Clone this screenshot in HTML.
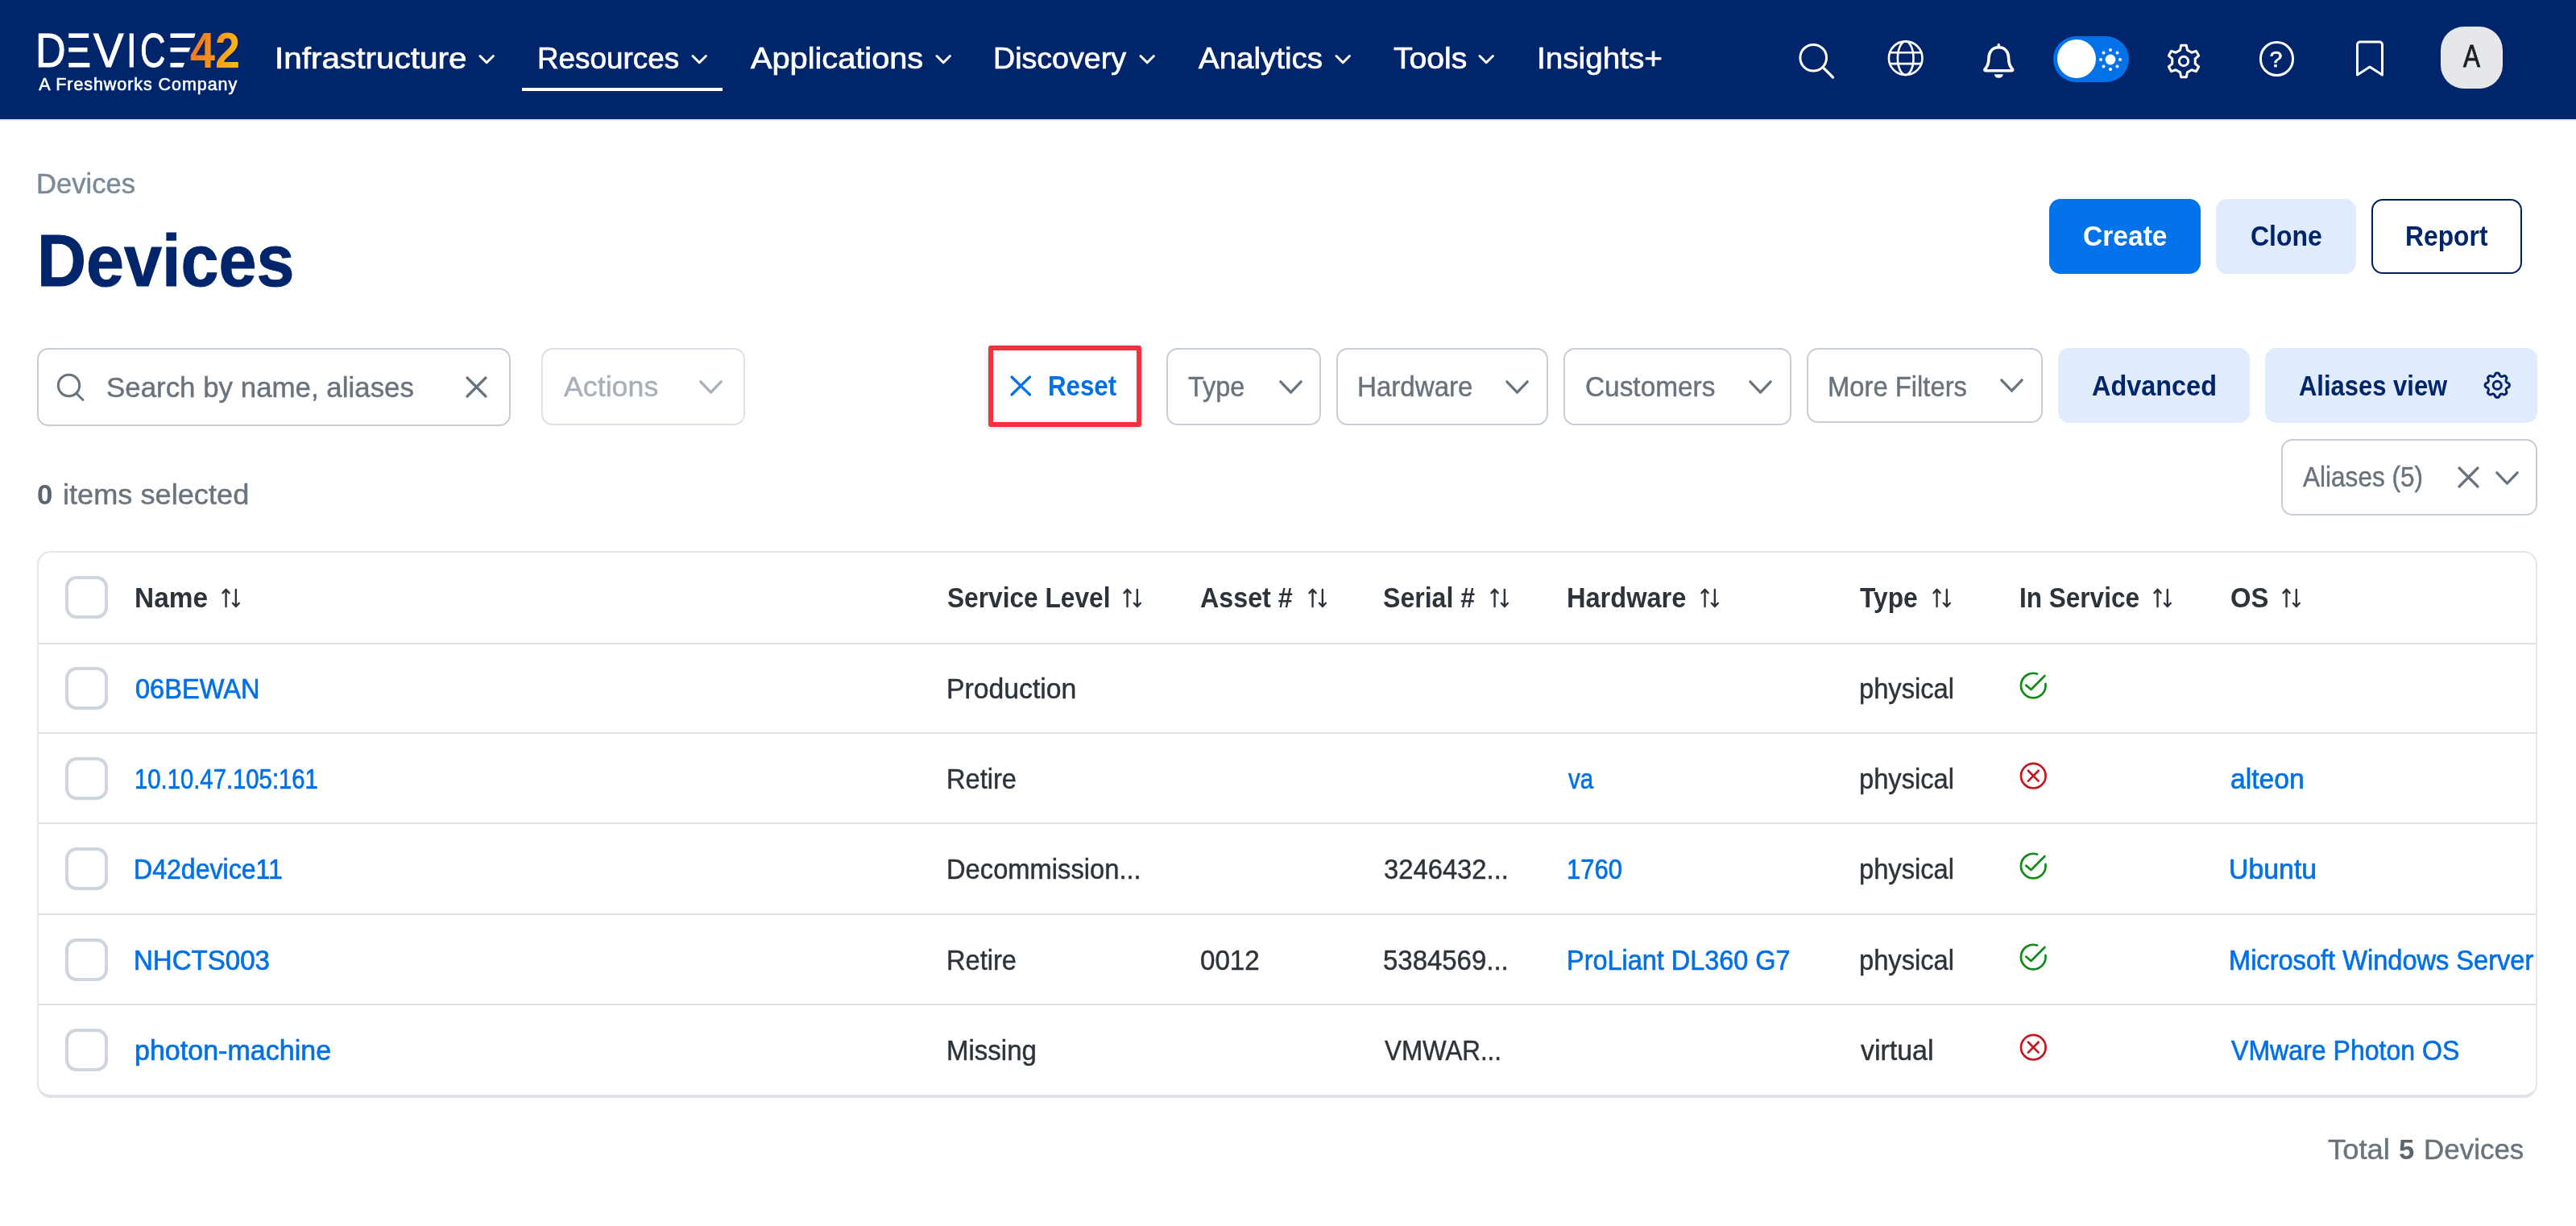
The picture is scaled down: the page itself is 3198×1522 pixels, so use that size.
<!DOCTYPE html>
<html lang="en"><head><meta charset="utf-8"><title>Devices</title><style>
*{box-sizing:border-box;margin:0;padding:0}
html,body{width:3198px;height:1522px;overflow:hidden;background:#fff}
body{position:relative;font-family:"Liberation Sans",sans-serif}
.t{position:absolute;white-space:nowrap;margin:0;display:block}
.abs,.icons svg,.chev{position:absolute}
.nav{position:absolute;left:0;top:0;width:3198px;height:148px;background:#00256b;box-shadow:0 2px 0 #e2e5ea;will-change:transform;z-index:2}
main{position:absolute;left:0;top:0;width:3198px;height:1522px;will-change:transform;z-index:1}
.ni{text-decoration:none}
.ul{position:absolute;left:648px;top:109.200px;width:249px;height:3.800px;background:#fff}
.toggle{position:absolute;left:2549px;top:44.800px;width:94px;height:57.200px;border-radius:29px;background:#0372e8}
.toggle svg{position:absolute}
.knob{position:absolute;left:4.500px;top:3.800px;width:48px;height:48px;border-radius:50%;background:#fff}
.help{position:absolute;left:2804.500px;top:51px;width:43.500px;height:43.500px;border:3px solid #fff;border-radius:50%}
.avatar{position:absolute;left:3030px;top:33px;width:77px;height:76.500px;border-radius:29px;background:#e5e7eb}
.btn{position:absolute;border-radius:14px}
.primary{background:#0273ea}
.light{background:#e0ebfd}
.outline{border:2px solid #001f63;background:#fff}
.box{position:absolute;border:2px solid #c6cdd5;border-radius:14px;background:#fff}
.reset{position:absolute;border:6px solid #f7303f;border-radius:3px;box-shadow:0 1px 6px rgba(0,0,0,.16),inset 0 0 4px rgba(0,0,0,.08)}
.table{position:absolute;border:2px solid #e3e6ea;border-bottom:4px solid #dfe3e8;border-radius:17px}
.hl{position:absolute;left:48px;width:3100px;height:2px;background:#dfe3e8}
.cb{position:absolute;left:81px;width:53px;height:53px;border:4px solid #cfd5dc;border-radius:14px}
.clip{position:absolute;overflow:hidden}
</style></head><body>
<header class="nav">
<div class="logo" aria-label="DEVICE42 A Freshworks Company">
<span class="t" style="left:43.52px;top:27.08px;font-size:59.8px;line-height:72px;font-weight:400;color:#fff;letter-spacing:0.000px;-webkit-text-stroke:1px #fff;transform:scaleX(0.8725);transform-origin:0 0;">D</span><span class="t" style="left:74.46px;top:27.08px;font-size:59.8px;line-height:72px;font-weight:400;color:#fff;letter-spacing:0.000px;-webkit-text-stroke:1px #fff;transform:scaleX(0.9874);transform-origin:0 0;clip-path:polygon(11.39px 2.92px,39.04px 2.92px,39.04px 67.92px,11.39px 67.92px);">E</span><span class="t" style="left:116.45px;top:27.08px;font-size:59.8px;line-height:72px;font-weight:400;color:#fff;letter-spacing:0.000px;-webkit-text-stroke:1px #fff;transform:scaleX(0.9401);transform-origin:0 0;">V</span><span class="t" style="left:156.74px;top:27.08px;font-size:59.8px;line-height:72px;font-weight:400;color:#fff;letter-spacing:0.000px;-webkit-text-stroke:1px #fff;transform:scaleX(0.7532);transform-origin:0 0;">I</span><span class="t" style="left:173.69px;top:27.08px;font-size:59.8px;line-height:72px;font-weight:400;color:#fff;letter-spacing:0.000px;-webkit-text-stroke:1px #fff;transform:scaleX(0.7288);transform-origin:0 0;">C</span><span class="t" style="left:196.72px;top:27.08px;font-size:59.8px;line-height:72px;font-weight:400;color:#fff;letter-spacing:0.000px;-webkit-text-stroke:1px #fff;transform:scaleX(1.2404);transform-origin:0 0;clip-path:polygon(11.68px 2.92px,40.63px 2.92px,20.71px 67.92px,11.68px 67.92px);">E</span><span class="t" style="left:236.46px;top:24.40px;font-size:63.5px;line-height:76px;font-weight:700;color:#f7941d;letter-spacing:0.000px;background:linear-gradient(100deg,#f47b20 20%,#fdb913 90%);-webkit-background-clip:text;background-clip:text;-webkit-text-fill-color:transparent;transform:scaleX(0.8789);transform-origin:0 0;">42</span>
<span class="t" style="left:48.26px;top:92.05px;font-size:21.5px;line-height:26px;font-weight:400;color:#fff;letter-spacing:0.931px;-webkit-text-stroke:0.55px #fff;">A Freshworks Company</span>
</div>
<nav>
<a class="ni"><span class="t" style="left:340.56px;top:51.15px;font-size:36.8px;line-height:44px;font-weight:400;color:#fff;letter-spacing:0.000px;-webkit-text-stroke:0.7px #fff;transform:scaleX(1.1004);transform-origin:0 0;">Infrastructure</span>
<svg class="chev" style="left:593.8px;top:67px" width="22" height="14" viewBox="0 0 22 14"><path d="M2 2.5 L10.2 10.7 L18.4 2.5" fill="none" stroke="#fff" stroke-width="3" stroke-linecap="round" stroke-linejoin="round"/></svg>
</a>
<a class="ni"><span class="t" style="left:666.88px;top:51.15px;font-size:36.8px;line-height:44px;font-weight:400;color:#fff;letter-spacing:0.000px;-webkit-text-stroke:0.7px #fff;transform:scaleX(1.0010);transform-origin:0 0;">Resources</span>
<svg class="chev" style="left:857.5px;top:67px" width="22" height="14" viewBox="0 0 22 14"><path d="M2 2.5 L10.2 10.7 L18.4 2.5" fill="none" stroke="#fff" stroke-width="3" stroke-linecap="round" stroke-linejoin="round"/></svg>
</a>
<a class="ni"><span class="t" style="left:931.62px;top:51.15px;font-size:36.8px;line-height:44px;font-weight:400;color:#fff;letter-spacing:0.000px;-webkit-text-stroke:0.7px #fff;transform:scaleX(1.0796);transform-origin:0 0;">Applications</span>
<svg class="chev" style="left:1160.8px;top:67px" width="22" height="14" viewBox="0 0 22 14"><path d="M2 2.5 L10.2 10.7 L18.4 2.5" fill="none" stroke="#fff" stroke-width="3" stroke-linecap="round" stroke-linejoin="round"/></svg>
</a>
<a class="ni"><span class="t" style="left:1233.42px;top:51.15px;font-size:36.8px;line-height:44px;font-weight:400;color:#fff;letter-spacing:0.000px;-webkit-text-stroke:0.7px #fff;transform:scaleX(1.0219);transform-origin:0 0;">Discovery</span>
<svg class="chev" style="left:1414.0px;top:67px" width="22" height="14" viewBox="0 0 22 14"><path d="M2 2.5 L10.2 10.7 L18.4 2.5" fill="none" stroke="#fff" stroke-width="3" stroke-linecap="round" stroke-linejoin="round"/></svg>
</a>
<a class="ni"><span class="t" style="left:1488.42px;top:51.15px;font-size:36.8px;line-height:44px;font-weight:400;color:#fff;letter-spacing:0.000px;-webkit-text-stroke:0.7px #fff;transform:scaleX(1.0457);transform-origin:0 0;">Analytics</span>
<svg class="chev" style="left:1656.9px;top:67px" width="22" height="14" viewBox="0 0 22 14"><path d="M2 2.5 L10.2 10.7 L18.4 2.5" fill="none" stroke="#fff" stroke-width="3" stroke-linecap="round" stroke-linejoin="round"/></svg>
</a>
<a class="ni"><span class="t" style="left:1730.12px;top:51.15px;font-size:36.8px;line-height:44px;font-weight:400;color:#fff;letter-spacing:0.000px;-webkit-text-stroke:0.7px #fff;transform:scaleX(1.0616);transform-origin:0 0;">Tools</span>
<svg class="chev" style="left:1835.4px;top:67px" width="22" height="14" viewBox="0 0 22 14"><path d="M2 2.5 L10.2 10.7 L18.4 2.5" fill="none" stroke="#fff" stroke-width="3" stroke-linecap="round" stroke-linejoin="round"/></svg>
</a>
<a class="ni"><span class="t" style="left:1907.63px;top:51.15px;font-size:36.8px;line-height:44px;font-weight:400;color:#fff;letter-spacing:0.000px;-webkit-text-stroke:0.7px #fff;transform:scaleX(1.0504);transform-origin:0 0;">Insights+</span>
</a>
<i class="ul"></i>
</nav>
<div class="icons">
<svg style="left:2229px;top:50px" width="52" height="52" viewBox="0 0 52 52"><circle cx="22.2" cy="21.7" r="16.3" fill="none" stroke="#fff" stroke-width="3"/><path d="M34 33.5 L46.5 46" stroke="#fff" stroke-width="3.2" stroke-linecap="round"/></svg>
<svg style="left:2341px;top:48px" width="50" height="50" viewBox="0 0 50 50"><g fill="none" stroke="#fff" stroke-width="2.6"><circle cx="24.7" cy="24.2" r="20.8"/><ellipse cx="24.7" cy="24.2" rx="9.800" ry="20.8"/><path d="M5.200 17.300H44.200M5.200 31.100H44.200"/></g></svg>
<svg style="left:2458px;top:50px" width="48" height="52" viewBox="0 0 48 52"><path d="M23.3 5.800 v3 M23.3 8.800 c-7.800 0 -12.300 5.800 -12.300 13.200 c0 8 -2.200 11.200 -4.700 13.800 c-0.800 0.800 -0.300 2 0.800 2 h32.400 c1.100 0 1.600 -1.200 0.800 -2 c-2.500 -2.600 -4.700 -5.800 -4.700 -13.800 c0 -7.400 -4.500 -13.200 -12.300 -13.200 z" fill="none" stroke="#fff" stroke-width="3.6" stroke-linejoin="round" stroke-linecap="round"/><path d="M17.800 42.300 a5.600 5.600 0 0 0 11 0 z" fill="#fff"/></svg>
<div class="toggle"><i class="knob"></i><svg style="left:54px;top:12px" width="34" height="34" viewBox="0 0 34 34"><g fill="#fff"><circle cx="17" cy="17" r="6.4"/><circle cx="17" cy="5" r="2"/><circle cx="17" cy="29" r="2"/><circle cx="5" cy="17" r="2"/><circle cx="29" cy="17" r="2"/><circle cx="8.500" cy="8.500" r="2"/><circle cx="25.500" cy="8.500" r="2"/><circle cx="8.500" cy="25.500" r="2"/><circle cx="25.500" cy="25.500" r="2"/></g></svg></div>
<svg style="left:2687.300px;top:49.900px" width="48" height="52" viewBox="0 0 48 52"><g fill="none" stroke="#fff" stroke-width="3" stroke-linejoin="round"><path d="M19.61 12.08 L20.72 6.37 L27.28 6.37 L28.39 12.08 L33.86 15.24 L39.36 13.34 L42.64 19.03 L38.25 22.84 L38.25 29.16 L42.64 32.97 L39.36 38.66 L33.86 36.76 L28.39 39.92 L27.28 45.63 L20.72 45.63 L19.61 39.92 L14.14 36.76 L8.64 38.66 L5.36 32.97 L9.75 29.16 L9.75 22.84 L5.36 19.03 L8.64 13.34 L14.14 15.24 Z"/><circle cx="24" cy="26" r="5.700"/></g></svg>
<div class="help"></div><span class="t" style="left:2817.53px;top:55.92px;font-size:28.5px;line-height:34px;font-weight:400;color:#fff;letter-spacing:0.000px;-webkit-text-stroke:0.6px #fff;">?</span>
<svg style="left:2921px;top:48px" width="42" height="50" viewBox="0 0 42 50"><path d="M5.5 7.500 a3.500 3.500 0 0 1 3.500 -3.500 h24 a3.500 3.500 0 0 1 3.500 3.500 V45 L21 35 L5.500 45 Z" fill="none" stroke="#fff" stroke-width="3" stroke-linejoin="round"/></svg>
<div class="avatar"></div><span class="t" style="left:3057.64px;top:46.01px;font-size:39.5px;line-height:47px;font-weight:400;color:#1b1f24;letter-spacing:0.000px;-webkit-text-stroke:0.9px #1b1f24;transform:scaleX(0.7941);transform-origin:0 0;">A</span>
</div>
</header>
<main>
<div class="t" style="left:45.16px;top:208.15px;font-size:34.5px;line-height:41px;font-weight:400;color:#7a8a96;letter-spacing:0.000px;transform:scaleX(1.0023);transform-origin:0 0;-webkit-text-stroke:0.45px #7a8a96;">Devices</div>
<h1 class="t" style="left:45.85px;top:269.01px;font-size:90.6px;line-height:109px;font-weight:700;color:#00256b;letter-spacing:0.000px;-webkit-text-stroke:1px #00256b;transform:scaleX(0.9326);transform-origin:0 0;">Devices</h1>
<div class="btn primary" style="left:2544px;top:246.800px;width:188.200px;height:93.200px"></div><span class="t" style="left:2585.72px;top:272.01px;font-size:34.6px;line-height:42px;font-weight:700;color:#fff;letter-spacing:0.000px;transform:scaleX(0.9711);transform-origin:0 0;">Create</span>
<div class="btn light" style="left:2750.900px;top:246.800px;width:173.800px;height:93.200px"></div><span class="t" style="left:2793.89px;top:272.01px;font-size:34.6px;line-height:42px;font-weight:700;color:#00256b;letter-spacing:0.000px;transform:scaleX(0.9246);transform-origin:0 0;">Clone</span>
<div class="btn outline" style="left:2944px;top:246.800px;width:187px;height:93.200px"></div><span class="t" style="left:2986.17px;top:272.01px;font-size:34.6px;line-height:42px;font-weight:700;color:#00256b;letter-spacing:0.000px;transform:scaleX(0.9201);transform-origin:0 0;">Report</span>
<div class="box" style="left:46.400px;top:432.100px;width:587.300px;height:96.600px"></div>
<svg class="abs" style="left:68px;top:461.600px" width="40" height="40" viewBox="0 0 40 40"><circle cx="17.500" cy="16.500" r="13.200" fill="none" stroke="#68737d" stroke-width="3"/><path d="M27 26.500 L35 34.500" stroke="#68737d" stroke-width="3" stroke-linecap="round"/></svg>
<span class="t" style="left:132.12px;top:459.64px;font-size:34.8px;line-height:42px;font-weight:400;color:#68737d;letter-spacing:0.000px;transform:scaleX(1.0024);transform-origin:0 0;-webkit-text-stroke:0.45px #68737d;">Search by name, aliases</span>
<svg class="abs" style="left:575.100px;top:464px" width="34" height="34" viewBox="0 0 34 34"><path d="M5 5 L28 28 M28 5 L5 28" stroke="#68737d" stroke-width="3.200" stroke-linecap="round"/></svg>
<div class="box" style="left:672.400px;top:432.100px;width:252.300px;height:96.300px;border-color:#dde2e8"></div>
<span class="t" style="left:700.33px;top:459.01px;font-size:34.6px;line-height:42px;font-weight:400;color:#a7b0b9;letter-spacing:0.000px;transform:scaleX(1.0341);transform-origin:0 0;-webkit-text-stroke:0.45px #a7b0b9;">Actions</span>
<svg class="abs" style="left:865.900px;top:469.500px" width="34" height="22" viewBox="0 0 34 22"><path d="M3.800 3.800 L16.500 17.200 L29.200 3.800" fill="none" stroke="#a7b0b9" stroke-width="3.200" stroke-linecap="round" stroke-linejoin="round"/></svg>
<div class="reset" style="left:1227px;top:428.500px;width:190.400px;height:101.200px"></div>
<svg class="abs" style="left:1253px;top:465px" width="30" height="30" viewBox="0 0 30 30"><path d="M3 3 L25.500 25 M25.500 3 L3 25" stroke="#0070e8" stroke-width="3.200" stroke-linecap="round"/></svg>
<span class="t" style="left:1301.11px;top:458.41px;font-size:34.6px;line-height:42px;font-weight:700;color:#0070e8;letter-spacing:0.000px;transform:scaleX(0.9044);transform-origin:0 0;">Reset</span>
<div class="box" style="left:1448.2px;top:432.1px;width:191.4px;height:95.5px"></div>
<span class="t" style="left:1475.17px;top:459.31px;font-size:34.6px;line-height:42px;font-weight:400;color:#68737d;letter-spacing:0.000px;transform:scaleX(0.9388);transform-origin:0 0;-webkit-text-stroke:0.45px #68737d;">Type</span>
<svg class="abs" style="left:1585.5px;top:469.5px" width="34" height="22" viewBox="0 0 34 22"><path d="M3.800 3.800 L16.500 17.200 L29.200 3.800" fill="none" stroke="#68737d" stroke-width="3.200" stroke-linecap="round" stroke-linejoin="round"/></svg>
<div class="box" style="left:1659.4px;top:432.1px;width:263px;height:95.5px"></div>
<span class="t" style="left:1684.68px;top:459.31px;font-size:34.6px;line-height:42px;font-weight:400;color:#68737d;letter-spacing:0.000px;transform:scaleX(0.9573);transform-origin:0 0;-webkit-text-stroke:0.45px #68737d;">Hardware</span>
<svg class="abs" style="left:1866.9px;top:469.5px" width="34" height="22" viewBox="0 0 34 22"><path d="M3.800 3.800 L16.500 17.200 L29.200 3.800" fill="none" stroke="#68737d" stroke-width="3.200" stroke-linecap="round" stroke-linejoin="round"/></svg>
<div class="box" style="left:1941.2px;top:432.1px;width:282.6px;height:95.5px"></div>
<span class="t" style="left:1968.00px;top:459.31px;font-size:34.6px;line-height:42px;font-weight:400;color:#68737d;letter-spacing:0.000px;transform:scaleX(0.9655);transform-origin:0 0;-webkit-text-stroke:0.45px #68737d;">Customers</span>
<svg class="abs" style="left:2169.2px;top:469.5px" width="34" height="22" viewBox="0 0 34 22"><path d="M3.800 3.800 L16.500 17.200 L29.200 3.800" fill="none" stroke="#68737d" stroke-width="3.200" stroke-linecap="round" stroke-linejoin="round"/></svg>
<div class="box" style="left:2243.1px;top:432.1px;width:292.8px;height:93.4px"></div>
<span class="t" style="left:2268.61px;top:458.61px;font-size:34.6px;line-height:42px;font-weight:400;color:#68737d;letter-spacing:0.000px;transform:scaleX(0.9477);transform-origin:0 0;-webkit-text-stroke:0.45px #68737d;">More Filters</span>
<svg class="abs" style="left:2481.2px;top:467.8px" width="34" height="22" viewBox="0 0 34 22"><path d="M3.800 3.800 L16.500 17.200 L29.200 3.800" fill="none" stroke="#68737d" stroke-width="3.200" stroke-linecap="round" stroke-linejoin="round"/></svg>
<div class="btn light" style="left:2555px;top:432.100px;width:238.200px;height:93.400px"></div><span class="t" style="left:2596.69px;top:458.01px;font-size:34.6px;line-height:42px;font-weight:700;color:#00256b;letter-spacing:0.000px;transform:scaleX(0.9376);transform-origin:0 0;">Advanced</span>
<div class="btn light" style="left:2812.100px;top:432.100px;width:337.900px;height:93px"></div><span class="t" style="left:2854.23px;top:458.01px;font-size:34.6px;line-height:42px;font-weight:700;color:#00256b;letter-spacing:0.000px;transform:scaleX(0.8956);transform-origin:0 0;">Aliases view</span>
<svg class="abs" style="left:3079.800px;top:457.900px" width="40.500" height="40.500" viewBox="0 0 24 24"><g fill="none" stroke="#00256b" stroke-width="1.750" stroke-linejoin="round"><path d="M10.325 4.317c.426-1.756 2.924-1.756 3.350 0a1.724 1.724 0 0 0 2.573 1.066c1.543-.940 3.310.826 2.370 2.370a1.724 1.724 0 0 0 1.065 2.572c1.756.426 1.756 2.924 0 3.350a1.724 1.724 0 0 0-1.066 2.573c.940 1.543-.826 3.310-2.370 2.370a1.724 1.724 0 0 0-2.572 1.065c-.426 1.756-2.924 1.756-3.350 0a1.724 1.724 0 0 0-2.573-1.066c-1.543.940-3.310-.826-2.370-2.370a1.724 1.724 0 0 0-1.065-2.572c-1.756-.426-1.756-2.924 0-3.350a1.724 1.724 0 0 0 1.066-2.573c-.940-1.543.826-3.310 2.370-2.370.996.608 2.296.070 2.572-1.065z"/><circle cx="12" cy="12" r="3"/></g></svg>
<div class="box" style="left:2831.5px;top:545px;width:318.5px;height:95px"></div>
<span class="t" style="left:2859.44px;top:571.01px;font-size:34.6px;line-height:42px;font-weight:400;color:#68737d;letter-spacing:0.000px;transform:scaleX(0.9124);transform-origin:0 0;-webkit-text-stroke:0.45px #68737d;">Aliases (5)</span>
<svg class="abs" style="left:3049px;top:577px" width="32" height="32" viewBox="0 0 32 32"><path d="M4 4 L27 27 M27 4 L4 27" stroke="#68737d" stroke-width="3.200" stroke-linecap="round"/></svg>
<svg class="abs" style="left:3096.300px;top:582.700px" width="34" height="22" viewBox="0 0 34 22"><path d="M3.800 3.800 L16.500 17.200 L29.200 3.800" fill="none" stroke="#68737d" stroke-width="3.200" stroke-linecap="round" stroke-linejoin="round"/></svg>
<span class="t" style="left:45.92px;top:593.04px;font-size:34.8px;line-height:42px;font-weight:700;color:#5b6670;letter-spacing:0.000px;">0</span>
<span class="t" style="left:78.08px;top:593.04px;font-size:34.8px;line-height:42px;font-weight:400;color:#68737d;letter-spacing:0.000px;transform:scaleX(1.0398);transform-origin:0 0;-webkit-text-stroke:0.45px #68737d;">items selected</span>
<section class="table" style="left:46px;top:684px;width:3104px;height:679px">
</section>
<i class="hl" style="top:797.7px"></i>
<i class="hl" style="top:908.8px"></i>
<i class="hl" style="top:1020.8px"></i>
<i class="hl" style="top:1133.8px"></i>
<i class="hl" style="top:1246.2px"></i>
<i class="cb" style="top:715.1px"></i>
<i class="cb" style="top:828px"></i>
<i class="cb" style="top:939.8px"></i>
<i class="cb" style="top:1052.3px"></i>
<i class="cb" style="top:1165px"></i>
<i class="cb" style="top:1277.1px"></i>
<span class="t" style="left:166.76px;top:720.71px;font-size:34.6px;line-height:42px;font-weight:700;color:#2c333a;letter-spacing:0.000px;transform:scaleX(0.9671);transform-origin:0 0;">Name</span>
<svg class="abs" style="left:274.6px;top:728.500px" width="26" height="28" viewBox="0 0 26 28"><g fill="none" stroke="#2c333a" stroke-width="2.400" stroke-linecap="round" stroke-linejoin="round"><path d="M5.550 23.950V2.950M1.550 7.150L5.550 2.950l4 4.200"/><path d="M17.850 2.950V23.950M13.850 19.750L17.850 23.950l4-4.200"/></g></svg>
<span class="t" style="left:1175.59px;top:720.71px;font-size:34.6px;line-height:42px;font-weight:700;color:#2c333a;letter-spacing:0.000px;transform:scaleX(0.9158);transform-origin:0 0;">Service Level</span>
<svg class="abs" style="left:1394.4px;top:728.500px" width="26" height="28" viewBox="0 0 26 28"><g fill="none" stroke="#2c333a" stroke-width="2.400" stroke-linecap="round" stroke-linejoin="round"><path d="M5.550 23.950V2.950M1.550 7.150L5.550 2.950l4 4.200"/><path d="M17.850 2.950V23.950M13.850 19.750L17.850 23.950l4-4.200"/></g></svg>
<span class="t" style="left:1490.40px;top:720.71px;font-size:34.6px;line-height:42px;font-weight:700;color:#2c333a;letter-spacing:0.000px;transform:scaleX(0.9326);transform-origin:0 0;">Asset #</span>
<svg class="abs" style="left:1623.7px;top:728.500px" width="26" height="28" viewBox="0 0 26 28"><g fill="none" stroke="#2c333a" stroke-width="2.400" stroke-linecap="round" stroke-linejoin="round"><path d="M5.550 23.950V2.950M1.550 7.150L5.550 2.950l4 4.200"/><path d="M17.850 2.950V23.950M13.850 19.750L17.850 23.950l4-4.200"/></g></svg>
<span class="t" style="left:1717.38px;top:720.71px;font-size:34.6px;line-height:42px;font-weight:700;color:#2c333a;letter-spacing:0.000px;transform:scaleX(0.9269);transform-origin:0 0;">Serial #</span>
<svg class="abs" style="left:1850px;top:728.500px" width="26" height="28" viewBox="0 0 26 28"><g fill="none" stroke="#2c333a" stroke-width="2.400" stroke-linecap="round" stroke-linejoin="round"><path d="M5.550 23.950V2.950M1.550 7.150L5.550 2.950l4 4.200"/><path d="M17.850 2.950V23.950M13.850 19.750L17.850 23.950l4-4.200"/></g></svg>
<span class="t" style="left:1945.02px;top:720.71px;font-size:34.6px;line-height:42px;font-weight:700;color:#2c333a;letter-spacing:0.000px;transform:scaleX(0.9410);transform-origin:0 0;">Hardware</span>
<svg class="abs" style="left:2110.9px;top:728.500px" width="26" height="28" viewBox="0 0 26 28"><g fill="none" stroke="#2c333a" stroke-width="2.400" stroke-linecap="round" stroke-linejoin="round"><path d="M5.550 23.950V2.950M1.550 7.150L5.550 2.950l4 4.200"/><path d="M17.850 2.950V23.950M13.850 19.750L17.850 23.950l4-4.200"/></g></svg>
<span class="t" style="left:2309.44px;top:720.71px;font-size:34.6px;line-height:42px;font-weight:700;color:#2c333a;letter-spacing:0.000px;transform:scaleX(0.9169);transform-origin:0 0;">Type</span>
<svg class="abs" style="left:2398.7px;top:728.500px" width="26" height="28" viewBox="0 0 26 28"><g fill="none" stroke="#2c333a" stroke-width="2.400" stroke-linecap="round" stroke-linejoin="round"><path d="M5.550 23.950V2.950M1.550 7.150L5.550 2.950l4 4.200"/><path d="M17.850 2.950V23.950M13.850 19.750L17.850 23.950l4-4.200"/></g></svg>
<span class="t" style="left:2507.19px;top:720.71px;font-size:34.6px;line-height:42px;font-weight:700;color:#2c333a;letter-spacing:0.000px;transform:scaleX(0.9119);transform-origin:0 0;">In Service</span>
<svg class="abs" style="left:2673.3px;top:728.500px" width="26" height="28" viewBox="0 0 26 28"><g fill="none" stroke="#2c333a" stroke-width="2.400" stroke-linecap="round" stroke-linejoin="round"><path d="M5.550 23.950V2.950M1.550 7.150L5.550 2.950l4 4.200"/><path d="M17.850 2.950V23.950M13.850 19.750L17.850 23.950l4-4.200"/></g></svg>
<span class="t" style="left:2768.65px;top:720.71px;font-size:34.6px;line-height:42px;font-weight:700;color:#2c333a;letter-spacing:0.000px;transform:scaleX(0.9494);transform-origin:0 0;">OS</span>
<svg class="abs" style="left:2833.3px;top:728.500px" width="26" height="28" viewBox="0 0 26 28"><g fill="none" stroke="#2c333a" stroke-width="2.400" stroke-linecap="round" stroke-linejoin="round"><path d="M5.550 23.950V2.950M1.550 7.150L5.550 2.950l4 4.200"/><path d="M17.850 2.950V23.950M13.850 19.750L17.850 23.950l4-4.200"/></g></svg>
<span class="t" style="left:167.73px;top:833.71px;font-size:34.6px;line-height:42px;font-weight:400;color:#0070e8;letter-spacing:0.000px;transform:scaleX(0.9418);transform-origin:0 0;-webkit-text-stroke:0.65px #0070e8;">06BEWAN</span>
<span class="t" style="left:1174.53px;top:833.71px;font-size:34.6px;line-height:42px;font-weight:400;color:#2c333a;letter-spacing:0.000px;transform:scaleX(0.9761);transform-origin:0 0;-webkit-text-stroke:0.45px #2c333a;">Production</span>
<span class="t" style="left:2307.69px;top:833.71px;font-size:34.6px;line-height:42px;font-weight:400;color:#2c333a;letter-spacing:0.000px;transform:scaleX(0.9445);transform-origin:0 0;-webkit-text-stroke:0.45px #2c333a;">physical</span>
<svg class="abs" style="left:2505px;top:832.1px" width="38" height="38" viewBox="0 0 38 38"><g fill="none" stroke="#118a1a" stroke-width="2.700" stroke-linecap="round" stroke-linejoin="round"><path d="M34.400 16.900 A15.300 15.300 0 1 1 24 4.550"/><path d="M10.200 18.600 L16.500 24 L33.400 7"/></g></svg>
<span class="t" style="left:166.77px;top:945.51px;font-size:34.6px;line-height:42px;font-weight:400;color:#0070e8;letter-spacing:0.000px;transform:scaleX(0.8464);transform-origin:0 0;-webkit-text-stroke:0.65px #0070e8;">10.10.47.105:161</span>
<span class="t" style="left:1174.63px;top:945.51px;font-size:34.6px;line-height:42px;font-weight:400;color:#2c333a;letter-spacing:0.000px;transform:scaleX(0.9424);transform-origin:0 0;-webkit-text-stroke:0.45px #2c333a;">Retire</span>
<span class="t" style="left:1947.10px;top:945.51px;font-size:34.6px;line-height:42px;font-weight:400;color:#0070e8;letter-spacing:0.000px;transform:scaleX(0.8516);transform-origin:0 0;-webkit-text-stroke:0.65px #0070e8;">va</span>
<span class="t" style="left:2307.69px;top:945.51px;font-size:34.6px;line-height:42px;font-weight:400;color:#2c333a;letter-spacing:0.000px;transform:scaleX(0.9445);transform-origin:0 0;-webkit-text-stroke:0.45px #2c333a;">physical</span>
<svg class="abs" style="left:2505px;top:943.9px" width="38" height="38" viewBox="0 0 38 38"><g fill="none" stroke="#c4161c" stroke-width="2.700" stroke-linecap="round"><circle cx="19.300" cy="19.200" r="15.300"/><path d="M12.900 12.800 L25.700 25.600 M25.700 12.800 L12.900 25.600"/></g></svg>
<span class="t" style="left:2768.57px;top:945.51px;font-size:34.6px;line-height:42px;font-weight:400;color:#0070e8;letter-spacing:0.000px;transform:scaleX(0.9746);transform-origin:0 0;-webkit-text-stroke:0.65px #0070e8;">alteon</span>
<span class="t" style="left:166.37px;top:1058.01px;font-size:34.6px;line-height:42px;font-weight:400;color:#0070e8;letter-spacing:0.000px;transform:scaleX(0.9273);transform-origin:0 0;-webkit-text-stroke:0.65px #0070e8;">D42device11</span>
<span class="t" style="left:1174.62px;top:1058.01px;font-size:34.6px;line-height:42px;font-weight:400;color:#2c333a;letter-spacing:0.000px;transform:scaleX(0.9457);transform-origin:0 0;-webkit-text-stroke:0.45px #2c333a;">Decommission...</span>
<span class="t" style="left:1717.55px;top:1058.01px;font-size:34.6px;line-height:42px;font-weight:400;color:#2c333a;letter-spacing:0.000px;transform:scaleX(0.9474);transform-origin:0 0;-webkit-text-stroke:0.45px #2c333a;">3246432...</span>
<span class="t" style="left:1944.84px;top:1058.01px;font-size:34.6px;line-height:42px;font-weight:400;color:#0070e8;letter-spacing:0.000px;transform:scaleX(0.8953);transform-origin:0 0;-webkit-text-stroke:0.65px #0070e8;">1760</span>
<span class="t" style="left:2307.69px;top:1058.01px;font-size:34.6px;line-height:42px;font-weight:400;color:#2c333a;letter-spacing:0.000px;transform:scaleX(0.9445);transform-origin:0 0;-webkit-text-stroke:0.45px #2c333a;">physical</span>
<svg class="abs" style="left:2505px;top:1056.4px" width="38" height="38" viewBox="0 0 38 38"><g fill="none" stroke="#118a1a" stroke-width="2.700" stroke-linecap="round" stroke-linejoin="round"><path d="M34.400 16.900 A15.300 15.300 0 1 1 24 4.550"/><path d="M10.200 18.600 L16.500 24 L33.400 7"/></g></svg>
<span class="t" style="left:2767.39px;top:1058.01px;font-size:34.6px;line-height:42px;font-weight:400;color:#0070e8;letter-spacing:0.000px;transform:scaleX(0.9790);transform-origin:0 0;-webkit-text-stroke:0.65px #0070e8;">Ubuntu</span>
<span class="t" style="left:166.29px;top:1170.71px;font-size:34.6px;line-height:42px;font-weight:400;color:#0070e8;letter-spacing:0.000px;transform:scaleX(0.9557);transform-origin:0 0;-webkit-text-stroke:0.65px #0070e8;">NHCTS003</span>
<span class="t" style="left:1174.63px;top:1170.71px;font-size:34.6px;line-height:42px;font-weight:400;color:#2c333a;letter-spacing:0.000px;transform:scaleX(0.9424);transform-origin:0 0;-webkit-text-stroke:0.45px #2c333a;">Retire</span>
<span class="t" style="left:1489.91px;top:1170.71px;font-size:34.6px;line-height:42px;font-weight:400;color:#2c333a;letter-spacing:0.000px;transform:scaleX(0.9576);transform-origin:0 0;-webkit-text-stroke:0.45px #2c333a;">0012</span>
<span class="t" style="left:1717.48px;top:1170.71px;font-size:34.6px;line-height:42px;font-weight:400;color:#2c333a;letter-spacing:0.000px;transform:scaleX(0.9529);transform-origin:0 0;-webkit-text-stroke:0.45px #2c333a;">5384569...</span>
<span class="t" style="left:1944.54px;top:1170.71px;font-size:34.6px;line-height:42px;font-weight:400;color:#0070e8;letter-spacing:0.000px;transform:scaleX(0.9377);transform-origin:0 0;-webkit-text-stroke:0.65px #0070e8;">ProLiant DL360 G7</span>
<span class="t" style="left:2307.69px;top:1170.71px;font-size:34.6px;line-height:42px;font-weight:400;color:#2c333a;letter-spacing:0.000px;transform:scaleX(0.9445);transform-origin:0 0;-webkit-text-stroke:0.45px #2c333a;">physical</span>
<svg class="abs" style="left:2505px;top:1169.1px" width="38" height="38" viewBox="0 0 38 38"><g fill="none" stroke="#118a1a" stroke-width="2.700" stroke-linecap="round" stroke-linejoin="round"><path d="M34.400 16.900 A15.300 15.300 0 1 1 24 4.550"/><path d="M10.200 18.600 L16.500 24 L33.400 7"/></g></svg>
<div class="clip" style="left:2700px;top:1151.2px;width:448px;height:80px">
<span class="t" style="left:67.16px;top:19.51px;font-size:34.6px;line-height:42px;font-weight:400;color:#0070e8;letter-spacing:0.000px;transform:scaleX(0.942);transform-origin:0 0;-webkit-text-stroke:0.65px #0070e8;">Microsoft Windows Server</span>
</div>
<span class="t" style="left:166.80px;top:1282.81px;font-size:34.6px;line-height:42px;font-weight:400;color:#0070e8;letter-spacing:0.000px;transform:scaleX(0.9844);transform-origin:0 0;-webkit-text-stroke:0.65px #0070e8;">photon-machine</span>
<span class="t" style="left:1174.59px;top:1282.81px;font-size:34.6px;line-height:42px;font-weight:400;color:#2c333a;letter-spacing:0.000px;transform:scaleX(0.9551);transform-origin:0 0;-webkit-text-stroke:0.45px #2c333a;">Missing</span>
<span class="t" style="left:1718.66px;top:1282.81px;font-size:34.6px;line-height:42px;font-weight:400;color:#2c333a;letter-spacing:0.000px;transform:scaleX(0.9058);transform-origin:0 0;-webkit-text-stroke:0.45px #2c333a;">VMWAR...</span>
<span class="t" style="left:2309.68px;top:1282.81px;font-size:34.6px;line-height:42px;font-weight:400;color:#2c333a;letter-spacing:0.000px;transform:scaleX(0.9810);transform-origin:0 0;-webkit-text-stroke:0.45px #2c333a;">virtual</span>
<svg class="abs" style="left:2505px;top:1281.2px" width="38" height="38" viewBox="0 0 38 38"><g fill="none" stroke="#c4161c" stroke-width="2.700" stroke-linecap="round"><circle cx="19.300" cy="19.200" r="15.300"/><path d="M12.900 12.800 L25.700 25.600 M25.700 12.800 L12.900 25.600"/></g></svg>
<span class="t" style="left:2769.86px;top:1282.81px;font-size:34.6px;line-height:42px;font-weight:400;color:#0070e8;letter-spacing:0.000px;transform:scaleX(0.9275);transform-origin:0 0;-webkit-text-stroke:0.65px #0070e8;">VMware Photon OS</span>
<span class="t" style="left:2890.18px;top:1405.74px;font-size:34.8px;line-height:42px;font-weight:400;color:#68737d;letter-spacing:0.000px;transform:scaleX(1.0470);transform-origin:0 0;-webkit-text-stroke:0.45px #68737d;">Total</span>
<span class="t" style="left:2978.03px;top:1405.74px;font-size:34.8px;line-height:42px;font-weight:700;color:#5b6670;letter-spacing:0.000px;">5</span>
<span class="t" style="left:3008.63px;top:1405.74px;font-size:34.8px;line-height:42px;font-weight:400;color:#68737d;letter-spacing:0.000px;transform:scaleX(1.0046);transform-origin:0 0;-webkit-text-stroke:0.45px #68737d;">Devices</span>
</main>
</body></html>
